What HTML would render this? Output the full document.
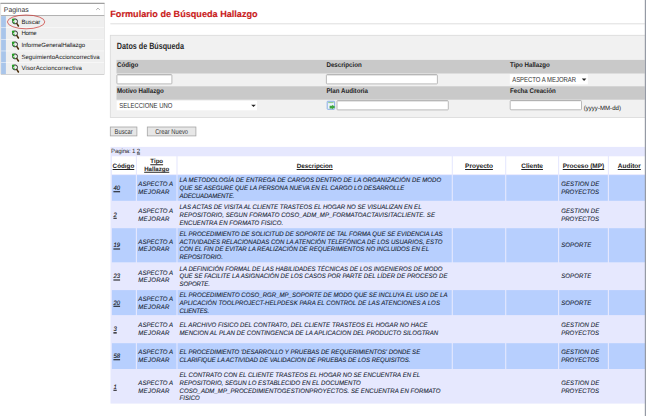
<!DOCTYPE html>
<html lang="es">
<head>
<meta charset="utf-8">
<title>Formulario de Búsqueda Hallazgo</title>
<style>
html,body{margin:0;padding:0;background:#fff;}
body{width:646px;height:416px;position:relative;overflow:hidden;font-family:"Liberation Sans",sans-serif;color:#222;}
.abs{position:absolute;left:0;top:0;white-space:nowrap;}
.h,.k,.pg,.lbl,.si,.sh,#ptitle,.d,.yy,.sel,.btn{transform-origin:0 50%;}
.sh{font-size:6.9px;line-height:9px;color:#333;}
.si{font-size:6.05px;line-height:9px;color:#161616;}
.ic{line-height:0;}
#title{font-size:9.12px;font-weight:bold;color:#c91a1a;-webkit-text-stroke:0.15px #c91a1a;line-height:13px;transform:translate(110.3px,7.85px) skewX(0.05deg);transform-origin:0 75%;}
#ptitle{transform:translate(116.8px,41.2px) skewX(0.05deg) scaleY(1.25);font-size:7.2px;font-weight:bold;color:#2a2a2a;line-height:10px;}
.lbl{font-size:6.15px;font-weight:bold;color:#222;line-height:8px;}
.sel{font-size:5.95px;line-height:10px;color:#333;}
.btn{font-size:5.8px;line-height:8px;color:#333;text-align:center;}
.h{font-size:6.5px;font-weight:bold;text-decoration:underline;text-decoration-thickness:0.5px;text-underline-offset:0.6px;color:#222;text-align:center;line-height:8px;}
.h2{font-size:6.1px;line-height:8px;}
.d{font-size:6.08px;font-style:italic;color:#141c30;line-height:7.75px;-webkit-text-stroke:0.08px #141c30;}
.k{font-size:6px;font-style:italic;text-decoration:underline;text-decoration-thickness:0.5px;text-underline-offset:0.6px;color:#111;line-height:8px;-webkit-text-stroke:0.08px #111;}
.pg{font-size:6.1px;line-height:8px;color:#333;}
</style>
</head>
<body>
<svg class="abs" style="left:0;top:0" width="646" height="416" viewBox="0 0 646 416">
<rect x="0.80" y="3.00" width="103.40" height="71.20" fill="#ffffff" stroke="#cfcfcf" stroke-width="0.6"/><rect x="0.50" y="2.90" width="104.00" height="0.90" fill="#8c8c8c" /><rect x="1.00" y="15.20" width="103.30" height="1.00" fill="#a0a0a0" /><rect x="1.10" y="16.10" width="102.90" height="58.10" fill="#efefef" /><rect x="1.10" y="16.10" width="4.80" height="58.10" fill="#a9c5ea" /><rect x="1.10" y="27.42" width="102.90" height="0.60" fill="#ffffff" opacity="0.85"/><rect x="1.10" y="39.04" width="102.90" height="0.60" fill="#ffffff" opacity="0.85"/><rect x="1.10" y="50.66" width="102.90" height="0.60" fill="#ffffff" opacity="0.85"/><rect x="1.10" y="62.28" width="102.90" height="0.60" fill="#ffffff" opacity="0.85"/><rect x="1.00" y="74.20" width="103.20" height="0.70" fill="#c9c9c9" /><rect x="110.30" y="23.30" width="534.50" height="1.00" fill="#dfdfdf" /><rect x="110.30" y="35.30" width="536.00" height="82.20" fill="#f1f1f1" stroke="#d9d9d9" stroke-width="0.8"/><rect x="116.50" y="59.90" width="528.30" height="13.60" fill="#c9c9c9" /><rect x="116.50" y="86.30" width="528.30" height="13.40" fill="#c9c9c9" /><rect x="116.90" y="74.70" width="55.00" height="9.20" fill="#ffffff" stroke="#b2b2b2" stroke-width="0.9" rx="0.8"/><rect x="117.30" y="74.60" width="54.20" height="0.60" fill="#9a9a9a" opacity="0.7"/><rect x="326.40" y="74.70" width="111.00" height="9.20" fill="#ffffff" stroke="#b2b2b2" stroke-width="0.9" rx="0.8"/><rect x="326.80" y="74.60" width="110.20" height="0.60" fill="#9a9a9a" opacity="0.7"/><rect x="337.00" y="100.70" width="111.30" height="9.20" fill="#ffffff" stroke="#b2b2b2" stroke-width="0.9" rx="0.8"/><rect x="337.40" y="100.60" width="110.50" height="0.60" fill="#9a9a9a" opacity="0.7"/><rect x="510.20" y="100.60" width="71.30" height="9.20" fill="#ffffff" stroke="#b2b2b2" stroke-width="0.9" rx="0.8"/><rect x="510.60" y="100.50" width="70.50" height="0.60" fill="#9a9a9a" opacity="0.7"/><rect x="509.80" y="74.20" width="78.00" height="10.20" fill="#ffffff" /><rect x="116.70" y="100.80" width="140.30" height="9.50" fill="#ffffff" /><path d="M581.8 78.5 h4.6 l-2.3 2.4z" fill="#222"/><path d="M251.2 104.7 h4.6 l-2.3 2.4z" fill="#222"/><rect x="110.30" y="127.00" width="26.60" height="8.90" fill="#e7e7e7" stroke="#a6a6a6" stroke-width="0.8"/><rect x="147.30" y="127.00" width="48.60" height="8.90" fill="#e7e7e7" stroke="#a6a6a6" stroke-width="0.8"/><g transform="translate(326.7,100.8)"><rect x="0.5" y="0.5" width="7.4" height="8.0" rx="0.6" fill="#edf3fc" stroke="#7fa7e2" stroke-width="0.9"/><rect x="1.5" y="1.4" width="5.4" height="0.9" fill="#7cc67c"/><path d="M2.9 4.9 H5.5 V3.9 L8.7 6.2 L5.5 8.5 V7.6 H2.9Z" fill="#3ea63e"/></g><rect x="110.50" y="146.90" width="534.50" height="256.70" fill="#e6e8fe" /><rect x="111.90" y="156.30" width="23.95" height="17.90" fill="#ffffff" /><rect x="136.95" y="156.30" width="39.50" height="17.90" fill="#ffffff" /><rect x="177.55" y="156.30" width="274.20" height="17.90" fill="#ffffff" /><rect x="452.85" y="156.30" width="52.30" height="17.90" fill="#ffffff" /><rect x="506.25" y="156.30" width="51.80" height="17.90" fill="#ffffff" /><rect x="559.15" y="156.30" width="48.70" height="17.90" fill="#ffffff" /><rect x="608.95" y="156.30" width="36.05" height="17.90" fill="#ffffff" /><rect x="111.90" y="175.10" width="23.95" height="25.70" fill="#b7cffe" /><rect x="136.95" y="175.10" width="39.50" height="25.70" fill="#b7cffe" /><rect x="177.55" y="175.10" width="274.20" height="25.70" fill="#b7cffe" /><rect x="452.85" y="175.10" width="52.30" height="25.70" fill="#b7cffe" /><rect x="506.25" y="175.10" width="51.80" height="25.70" fill="#b7cffe" /><rect x="559.15" y="175.10" width="48.70" height="25.70" fill="#b7cffe" /><rect x="608.95" y="175.10" width="36.05" height="25.70" fill="#b7cffe" /><rect x="111.90" y="228.20" width="23.95" height="34.10" fill="#b7cffe" /><rect x="136.95" y="228.20" width="39.50" height="34.10" fill="#b7cffe" /><rect x="177.55" y="228.20" width="274.20" height="34.10" fill="#b7cffe" /><rect x="452.85" y="228.20" width="52.30" height="34.10" fill="#b7cffe" /><rect x="506.25" y="228.20" width="51.80" height="34.10" fill="#b7cffe" /><rect x="559.15" y="228.20" width="48.70" height="34.10" fill="#b7cffe" /><rect x="608.95" y="228.20" width="36.05" height="34.10" fill="#b7cffe" /><rect x="111.90" y="290.10" width="23.95" height="25.00" fill="#b7cffe" /><rect x="136.95" y="290.10" width="39.50" height="25.00" fill="#b7cffe" /><rect x="177.55" y="290.10" width="274.20" height="25.00" fill="#b7cffe" /><rect x="452.85" y="290.10" width="52.30" height="25.00" fill="#b7cffe" /><rect x="506.25" y="290.10" width="51.80" height="25.00" fill="#b7cffe" /><rect x="559.15" y="290.10" width="48.70" height="25.00" fill="#b7cffe" /><rect x="608.95" y="290.10" width="36.05" height="25.00" fill="#b7cffe" /><rect x="111.90" y="343.20" width="23.95" height="25.80" fill="#b7cffe" /><rect x="136.95" y="343.20" width="39.50" height="25.80" fill="#b7cffe" /><rect x="177.55" y="343.20" width="274.20" height="25.80" fill="#b7cffe" /><rect x="452.85" y="343.20" width="52.30" height="25.80" fill="#b7cffe" /><rect x="506.25" y="343.20" width="51.80" height="25.80" fill="#b7cffe" /><rect x="559.15" y="343.20" width="48.70" height="25.80" fill="#b7cffe" /><rect x="608.95" y="343.20" width="36.05" height="25.80" fill="#b7cffe" /><ellipse cx="26.1" cy="21.9" rx="18.7" ry="6.9" fill="none" stroke="#c9302c" stroke-width="0.7"/><path d="M96.2 9.9 L98 8.1 L99.8 9.9" fill="none" stroke="#9a9a9a" stroke-width="0.8"/><rect x="644.80" y="0.00" width="1.20" height="416.00" fill="#959aa4" /></svg>
<div class="abs sh" style="transform:translate(3.8px,5.1px) skewX(.05deg);">Paginas</div>
<div class="abs ic" style="left:11.1px;top:18.00px"><svg width="9" height="9" viewBox="0 0 9 9"><circle cx="4.0" cy="3.4" r="2.5" fill="#e9eee9" stroke="#333" stroke-width="1.0"/><circle cx="2.8" cy="4.5" r="0.9" fill="#35b035"/><path d="M5.9 5.6 L7.4 8.0" stroke="#4a2e0a" stroke-width="1.5" stroke-linecap="round"/><circle cx="2.2" cy="1.8" r="1.3" fill="#22a022"/></svg></div><div class="abs si" style="transform:translate(21.4px,17.80px) skewX(.05deg);letter-spacing:0.029px">Buscar</div>
<div class="abs ic" style="left:11.1px;top:29.62px"><svg width="9" height="9" viewBox="0 0 9 9"><circle cx="4.0" cy="3.4" r="2.5" fill="#e9eee9" stroke="#333" stroke-width="1.0"/><circle cx="2.8" cy="4.5" r="0.9" fill="#35b035"/><path d="M5.9 5.6 L7.4 8.0" stroke="#4a2e0a" stroke-width="1.5" stroke-linecap="round"/><circle cx="2.2" cy="1.8" r="1.3" fill="#22a022"/></svg></div><div class="abs si" style="transform:translate(21.4px,29.42px) skewX(.05deg);letter-spacing:-0.335px">Home</div>
<div class="abs ic" style="left:11.1px;top:41.24px"><svg width="9" height="9" viewBox="0 0 9 9"><circle cx="4.0" cy="3.4" r="2.5" fill="#e9eee9" stroke="#333" stroke-width="1.0"/><circle cx="2.8" cy="4.5" r="0.9" fill="#35b035"/><path d="M5.9 5.6 L7.4 8.0" stroke="#4a2e0a" stroke-width="1.5" stroke-linecap="round"/><circle cx="2.2" cy="1.8" r="1.3" fill="#22a022"/></svg></div><div class="abs si" style="transform:translate(21.4px,41.04px) skewX(.05deg);letter-spacing:-0.088px">InformeGeneralHallazgo</div>
<div class="abs ic" style="left:11.1px;top:52.86px"><svg width="9" height="9" viewBox="0 0 9 9"><circle cx="4.0" cy="3.4" r="2.5" fill="#e9eee9" stroke="#333" stroke-width="1.0"/><circle cx="2.8" cy="4.5" r="0.9" fill="#35b035"/><path d="M5.9 5.6 L7.4 8.0" stroke="#4a2e0a" stroke-width="1.5" stroke-linecap="round"/><circle cx="2.2" cy="1.8" r="1.3" fill="#22a022"/></svg></div><div class="abs si" style="transform:translate(21.4px,52.66px) skewX(.05deg);letter-spacing:0.008px">SeguimientoAccioncorrectiva</div>
<div class="abs ic" style="left:11.1px;top:64.48px"><svg width="9" height="9" viewBox="0 0 9 9"><circle cx="4.0" cy="3.4" r="2.5" fill="#e9eee9" stroke="#333" stroke-width="1.0"/><circle cx="2.8" cy="4.5" r="0.9" fill="#35b035"/><path d="M5.9 5.6 L7.4 8.0" stroke="#4a2e0a" stroke-width="1.5" stroke-linecap="round"/><circle cx="2.2" cy="1.8" r="1.3" fill="#22a022"/></svg></div><div class="abs si" style="transform:translate(21.4px,64.28px) skewX(.05deg);letter-spacing:0.127px">VisorAccioncorrectiva</div>
<div class="abs" id="title">Formulario de Búsqueda Hallazgo</div>
<div class="abs" id="ptitle">Datos de Búsqueda</div>
<div class="abs lbl" style="transform:translate(117px,60.7px) skewX(.05deg) scaleY(1.1);">Código</div><div class="abs lbl" style="transform:translate(117px,86.8px) skewX(.05deg) scaleY(1.1);">Motivo Hallazgo</div>
<div class="abs lbl" style="transform:translate(326.5px,60.7px) skewX(.05deg) scaleY(1.1);">Descripcion</div><div class="abs lbl" style="transform:translate(326.5px,86.8px) skewX(.05deg) scaleY(1.1);">Plan Auditoria</div>
<div class="abs lbl" style="transform:translate(510px,60.7px) skewX(.05deg) scaleY(1.1);">Tipo Hallazgo</div><div class="abs lbl" style="transform:translate(510px,86.8px) skewX(.05deg) scaleY(1.1);">Fecha Creación</div>
<div class="abs sel" style="transform:translate(512.2px,74.3px) skewX(.05deg) scaleY(1.22);">ASPECTO A MEJORAR</div>
<div class="abs sel" style="transform:translate(119.3px,100.7px) skewX(.05deg) scaleY(1.22);">SELECCIONE UNO</div>
<div class="abs yy" style="transform:translate(583.7px,103.5px) skewX(.05deg);font-size:6.1px;line-height:8px;color:#222;white-space:nowrap">(yyyy-MM-dd)</div>
<div class="abs btn" style="transform:translate(110.3px,127.4px) skewX(.05deg) scaleY(1.22);width:26.6px">Buscar</div>
<div class="abs btn" style="transform:translate(147.3px,127.4px) skewX(.05deg) scaleY(1.22);width:48.6px">Crear Nuevo</div>
<div class="abs pg" style="transform:translate(111.1px,147.4px) skewX(.05deg);letter-spacing:-0.168px">Pagina: 1 <u style="text-decoration-thickness:0.5px;text-underline-offset:0.3px">2</u></div>
<div class="abs h" style="transform:translate(110.5px,161.88px) skewX(.05deg);width:25.9px;font-size:6.3px">Código</div>
<div class="abs h h2" style="transform:translate(136.4px,157.2px) skewX(.05deg);width:40.6px">Tipo</div>
<div class="abs h h2" style="transform:translate(136.4px,164.7px) skewX(.05deg);width:40.6px">Hallazgo</div>
<div class="abs h" style="transform:translate(177.0px,161.88px) skewX(.05deg);width:275.3px;font-size:6.3px">Descripcion</div>
<div class="abs h" style="transform:translate(452.3px,161.88px) skewX(.05deg);width:53.4px;font-size:6.5px">Proyecto</div>
<div class="abs h" style="transform:translate(505.7px,161.88px) skewX(.05deg);width:52.9px;font-size:6.5px">Cliente</div>
<div class="abs h" style="transform:translate(558.6px,161.88px) skewX(.05deg);width:49.8px;font-size:6.5px">Proceso (MP)</div>
<div class="abs h" style="transform:translate(608.4px,161.88px) skewX(.05deg);width:41.8px;font-size:6.5px">Auditor</div>
<div class="abs k" style="transform:translate(113.4px,183.98px) skewX(.05deg) scaleY(1.06);">40</div>
<div class="abs d" style="transform:translate(138.3px,180.18px) skewX(.05deg) scaleY(1.06);letter-spacing:0.048px">ASPECTO A</div>
<div class="abs d" style="transform:translate(138.3px,187.98px) skewX(.05deg) scaleY(1.06);letter-spacing:0.240px">MEJORAR</div>
<div class="abs d" style="transform:translate(179.5px,176.28px) skewX(.05deg) scaleY(1.06);letter-spacing:0.045px">LA METODOLOGÍA DE ENTREGA DE CARGOS DENTRO DE LA ORGANIZACIÓN DE MODO</div>
<div class="abs d" style="transform:translate(179.5px,184.08px) skewX(.05deg) scaleY(1.06);letter-spacing:-0.030px">QUE SE ASEGURE QUE LA PERSONA NUEVA EN EL CARGO LO DESARROLLE</div>
<div class="abs d" style="transform:translate(179.5px,191.88px) skewX(.05deg) scaleY(1.06);letter-spacing:-0.132px">ADECUADAMENTE.</div>
<div class="abs d" style="transform:translate(561.2px,180.18px) skewX(.05deg) scaleY(1.06);letter-spacing:0.070px">GESTION DE</div>
<div class="abs d" style="transform:translate(561.2px,187.98px) skewX(.05deg) scaleY(1.06);letter-spacing:-0.029px">PROYECTOS</div>
<div class="abs k" style="transform:translate(113.4px,210.50px) skewX(.05deg) scaleY(1.06);">2</div>
<div class="abs d" style="transform:translate(138.3px,206.70px) skewX(.05deg) scaleY(1.06);letter-spacing:0.048px">ASPECTO A</div>
<div class="abs d" style="transform:translate(138.3px,214.50px) skewX(.05deg) scaleY(1.06);letter-spacing:0.240px">MEJORAR</div>
<div class="abs d" style="transform:translate(179.5px,202.80px) skewX(.05deg) scaleY(1.06);letter-spacing:-0.025px">LAS ACTAS DE VISITA AL CLIENTE TRASTEOS EL HOGAR NO SE VISUALIZAN EN EL</div>
<div class="abs d" style="transform:translate(179.5px,210.60px) skewX(.05deg) scaleY(1.06);letter-spacing:0.050px">REPOSITORIO, SEGUN FORMATO COSO_ADM_MP_FORMATOACTAVISITACLIENTE. SE</div>
<div class="abs d" style="transform:translate(179.5px,218.40px) skewX(.05deg) scaleY(1.06);letter-spacing:0.029px">ENCUENTRA EN FORMATO FISICO.</div>
<div class="abs d" style="transform:translate(561.2px,206.70px) skewX(.05deg) scaleY(1.06);letter-spacing:0.070px">GESTION DE</div>
<div class="abs d" style="transform:translate(561.2px,214.50px) skewX(.05deg) scaleY(1.06);letter-spacing:-0.029px">PROYECTOS</div>
<div class="abs k" style="transform:translate(113.4px,241.25px) skewX(.05deg) scaleY(1.06);">19</div>
<div class="abs d" style="transform:translate(138.3px,237.45px) skewX(.05deg) scaleY(1.06);letter-spacing:0.048px">ASPECTO A</div>
<div class="abs d" style="transform:translate(138.3px,245.25px) skewX(.05deg) scaleY(1.06);letter-spacing:0.240px">MEJORAR</div>
<div class="abs d" style="transform:translate(179.5px,229.65px) skewX(.05deg) scaleY(1.06);letter-spacing:-0.011px">EL PROCEDIMIENTO DE SOLICITUD DE SOPORTE DE TAL FORMA QUE SE EVIDENCIA LAS</div>
<div class="abs d" style="transform:translate(179.5px,237.45px) skewX(.05deg) scaleY(1.06);letter-spacing:-0.003px">ACTIVIDADES RELACIONADAS CON LA ATENCIÓN TELEFÓNICA DE LOS USUARIOS, ESTO</div>
<div class="abs d" style="transform:translate(179.5px,245.25px) skewX(.05deg) scaleY(1.06);letter-spacing:-0.012px">CON EL FIN DE EVITAR LA REALIZACIÓN DE REQUERIMIENTOS NO INCLUIDOS EN EL</div>
<div class="abs d" style="transform:translate(179.5px,253.05px) skewX(.05deg) scaleY(1.06);letter-spacing:-0.041px">REPOSITORIO.</div>
<div class="abs d" style="transform:translate(561.2px,241.35px) skewX(.05deg) scaleY(1.06);letter-spacing:0.068px">SOPORTE</div>
<div class="abs k" style="transform:translate(113.4px,272.20px) skewX(.05deg) scaleY(1.06);">23</div>
<div class="abs d" style="transform:translate(138.3px,268.40px) skewX(.05deg) scaleY(1.06);letter-spacing:0.048px">ASPECTO A</div>
<div class="abs d" style="transform:translate(138.3px,276.20px) skewX(.05deg) scaleY(1.06);letter-spacing:0.240px">MEJORAR</div>
<div class="abs d" style="transform:translate(179.5px,264.50px) skewX(.05deg) scaleY(1.06);letter-spacing:-0.001px">LA DEFINICIÓN FORMAL DE LAS HABILIDADES TÉCNICAS DE LOS INGENIEROS DE MODO</div>
<div class="abs d" style="transform:translate(179.5px,272.30px) skewX(.05deg) scaleY(1.06);letter-spacing:0.000px">QUE SE FACILITE LA ASIGNACIÓN DE LOS CASOS POR PARTE DEL LÍDER DE PROCESO DE</div>
<div class="abs d" style="transform:translate(179.5px,280.10px) skewX(.05deg) scaleY(1.06);letter-spacing:-0.139px">SOPORTE.</div>
<div class="abs d" style="transform:translate(561.2px,272.30px) skewX(.05deg) scaleY(1.06);letter-spacing:0.068px">SOPORTE</div>
<div class="abs k" style="transform:translate(113.4px,298.60px) skewX(.05deg) scaleY(1.06);">20</div>
<div class="abs d" style="transform:translate(138.3px,294.80px) skewX(.05deg) scaleY(1.06);letter-spacing:0.048px">ASPECTO A</div>
<div class="abs d" style="transform:translate(138.3px,302.60px) skewX(.05deg) scaleY(1.06);letter-spacing:0.240px">MEJORAR</div>
<div class="abs d" style="transform:translate(179.5px,290.90px) skewX(.05deg) scaleY(1.06);letter-spacing:-0.003px">EL PROCEDIMIENTO COSO_RGR_MP_SOPORTE DE MODO QUE SE INCLUYA EL USO DE LA</div>
<div class="abs d" style="transform:translate(179.5px,298.70px) skewX(.05deg) scaleY(1.06);letter-spacing:0.034px">APLICACIÓN TOOLPROJECT-HELPDESK PARA EL CONTROL DE LAS ATENCIONES A LOS</div>
<div class="abs d" style="transform:translate(179.5px,306.50px) skewX(.05deg) scaleY(1.06);letter-spacing:-0.225px">CLIENTES.</div>
<div class="abs d" style="transform:translate(561.2px,298.70px) skewX(.05deg) scaleY(1.06);letter-spacing:0.068px">SOPORTE</div>
<div class="abs k" style="transform:translate(113.4px,325.15px) skewX(.05deg) scaleY(1.06);">3</div>
<div class="abs d" style="transform:translate(138.3px,321.35px) skewX(.05deg) scaleY(1.06);letter-spacing:0.048px">ASPECTO A</div>
<div class="abs d" style="transform:translate(138.3px,329.15px) skewX(.05deg) scaleY(1.06);letter-spacing:0.240px">MEJORAR</div>
<div class="abs d" style="transform:translate(179.5px,321.35px) skewX(.05deg) scaleY(1.06);letter-spacing:0.027px">EL ARCHIVO FISICO DEL CONTRATO, DEL CLIENTE TRASTEOS EL HOGAR NO HACE</div>
<div class="abs d" style="transform:translate(179.5px,329.15px) skewX(.05deg) scaleY(1.06);letter-spacing:0.023px">MENCION AL PLAN DE CONTINGENCIA DE LA APLICACION DEL PRODUCTO SILOGTRAN</div>
<div class="abs d" style="transform:translate(561.2px,321.35px) skewX(.05deg) scaleY(1.06);letter-spacing:0.070px">GESTION DE</div>
<div class="abs d" style="transform:translate(561.2px,329.15px) skewX(.05deg) scaleY(1.06);letter-spacing:-0.029px">PROYECTOS</div>
<div class="abs k" style="transform:translate(113.4px,352.10px) skewX(.05deg) scaleY(1.06);">58</div>
<div class="abs d" style="transform:translate(138.3px,348.30px) skewX(.05deg) scaleY(1.06);letter-spacing:0.048px">ASPECTO A</div>
<div class="abs d" style="transform:translate(138.3px,356.10px) skewX(.05deg) scaleY(1.06);letter-spacing:0.240px">MEJORAR</div>
<div class="abs d" style="transform:translate(179.5px,348.30px) skewX(.05deg) scaleY(1.06);letter-spacing:-0.029px">EL PROCEDIMIENTO 'DESARROLLO Y PRUEBAS DE REQUERIMIENTOS' DONDE SE</div>
<div class="abs d" style="transform:translate(179.5px,356.10px) skewX(.05deg) scaleY(1.06);letter-spacing:-0.035px">CLARIFIQUE LA ACTIVIDAD DE VALIDACION DE PRUEBAS DE LOS REQUISITOS.</div>
<div class="abs d" style="transform:translate(561.2px,348.30px) skewX(.05deg) scaleY(1.06);letter-spacing:0.070px">GESTION DE</div>
<div class="abs d" style="transform:translate(561.2px,356.10px) skewX(.05deg) scaleY(1.06);letter-spacing:-0.029px">PROYECTOS</div>
<div class="abs k" style="transform:translate(113.4px,382.55px) skewX(.05deg) scaleY(1.06);">1</div>
<div class="abs d" style="transform:translate(138.3px,378.75px) skewX(.05deg) scaleY(1.06);letter-spacing:0.048px">ASPECTO A</div>
<div class="abs d" style="transform:translate(138.3px,386.55px) skewX(.05deg) scaleY(1.06);letter-spacing:0.240px">MEJORAR</div>
<div class="abs d" style="transform:translate(179.5px,370.95px) skewX(.05deg) scaleY(1.06);letter-spacing:-0.000px">EL CONTRATO CON EL CLIENTE TRASTEOS EL HOGAR NO SE ENCUENTRA EN EL</div>
<div class="abs d" style="transform:translate(179.5px,378.75px) skewX(.05deg) scaleY(1.06);letter-spacing:0.001px">REPOSITORIO, SEGUN LO ESTABLECIDO EN EL DOCUMENTO</div>
<div class="abs d" style="transform:translate(179.5px,386.55px) skewX(.05deg) scaleY(1.06);letter-spacing:0.019px">COSO_ADM_MP_PROCEDIMIENTOGESTIONPROYECTOS. SE ENCUENTRA EN FORMATO</div>
<div class="abs d" style="transform:translate(179.5px,394.35px) skewX(.05deg) scaleY(1.06);letter-spacing:0.006px">FISICO</div>
<div class="abs d" style="transform:translate(561.2px,378.75px) skewX(.05deg) scaleY(1.06);letter-spacing:0.070px">GESTION DE</div>
<div class="abs d" style="transform:translate(561.2px,386.55px) skewX(.05deg) scaleY(1.06);letter-spacing:-0.029px">PROYECTOS</div>
</body>
</html>
